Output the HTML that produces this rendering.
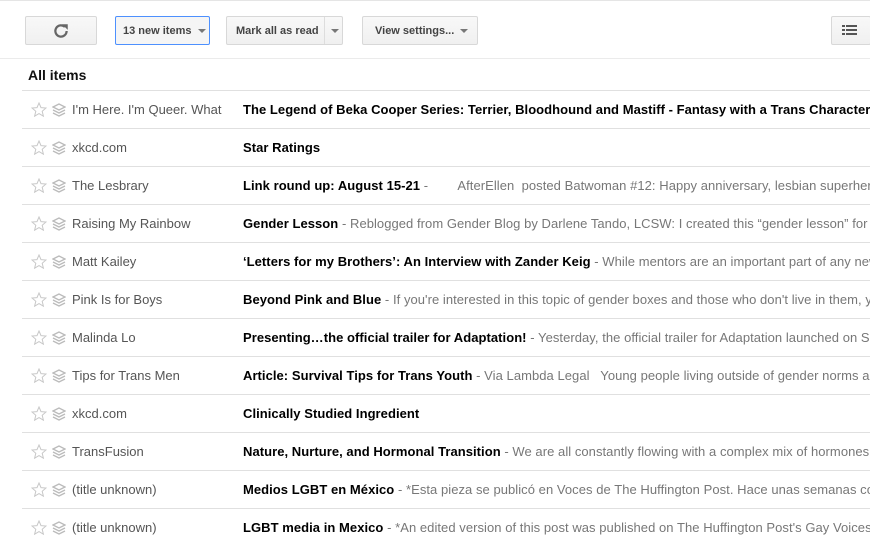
<!DOCTYPE html>
<html><head><style>
body{margin:0;width:870px;height:547px;overflow:hidden;background:#fff;font-family:"Liberation Sans",Arial,sans-serif;position:relative}
.top{position:absolute;left:0;top:0;width:870px;height:1px;background:#e5e5e5}
.btn{position:absolute;top:16px;height:29px;box-sizing:border-box;border:1px solid #d8d8d8;border-radius:2px;background:linear-gradient(#f8f8f8,#f0f0f0);font-size:11px;font-weight:bold;color:#444;line-height:28px}
.arr{display:inline-block;width:0;height:0;border-left:4px solid transparent;border-right:4px solid transparent;border-top:4px solid #777;vertical-align:middle}
.sep{position:absolute;left:0;top:58px;width:870px;height:1px;background:#ebebeb}
h1{position:absolute;left:28px;top:67px;margin:0;font-size:14px;font-weight:bold;color:#111}
.row{position:absolute;left:22px;width:848px;height:38px;border-top:1px solid #e0e0e0;font-size:13px;line-height:38px;white-space:nowrap;overflow:hidden}
.star{position:absolute;left:9px;top:11px}
.stk{position:absolute;left:30px;top:12px}
.src{position:absolute;left:50px;color:#555;width:160px;overflow:hidden}
.t{position:absolute;left:221px;color:#000;letter-spacing:0.05px}
.t span{color:#777}
</style></head><body>
<div class="top"></div>
<div class="btn" style="left:25px;width:72px;text-align:center">
<svg width="18" height="18" viewBox="0 0 16 16" style="margin-top:5px"><path d="M13 8a5 5 0 1 1-1.5-3.6" fill="none" stroke="#666" stroke-width="2"/><path d="M9 2h5v5z" fill="#666"/></svg></div>
<div class="btn" style="left:115px;width:95px;border-color:#4d90fe;background:#f5f5f5;padding-left:7px">13 new items &nbsp;<span class="arr"></span></div>
<div class="btn" style="left:226px;width:117px;padding-left:9px">Mark all as read<span style="position:absolute;left:97px;top:0;height:27px;border-left:1px solid #ddd;width:19px;text-align:center"><span class="arr"></span></span></div>
<div class="btn" style="left:362px;width:116px;padding-left:12px">View settings... &nbsp;<span class="arr"></span></div>
<div class="btn" style="left:831px;width:40px;padding-left:10px"><svg width="16" height="12" viewBox="0 0 16 12" style="margin-top:8px"><g fill="#555"><rect x="0" y="0" width="3" height="2"/><rect x="4" y="0" width="11" height="2"/><rect x="0" y="4" width="3" height="2"/><rect x="4" y="4" width="11" height="2"/><rect x="0" y="8" width="3" height="2"/><rect x="4" y="8" width="11" height="2"/></g></svg></div>
<div class="sep"></div>
<h1>All items</h1>
<div id="rows"></div>
<script>
var d=[["I'm Here. I'm Queer. What","The Legend of Beka Cooper Series: Terrier, Bloodhound and Mastiff - Fantasy with a Trans Character",""],
["xkcd.com","Star Ratings",""],
["The Lesbrary","Link round up: August 15-21"," - &nbsp;&nbsp;&nbsp;&nbsp;&nbsp;&nbsp;&nbsp;AfterEllen &nbsp;posted Batwoman #12: Happy anniversary, lesbian superheroes"],
["Raising My Rainbow","Gender Lesson"," - Reblogged from Gender Blog by Darlene Tando, LCSW: I created this “gender lesson” for the"],
["Matt Kailey","‘Letters for my Brothers’: An Interview with Zander Keig"," - While mentors are an important part of any new"],
["Pink Is for Boys","Beyond Pink and Blue"," - If you're interested in this topic of gender boxes and those who don't live in them, you"],
["Malinda Lo","Presenting…the official trailer for Adaptation!"," - Yesterday, the official trailer for Adaptation launched on Sh"],
["Tips for Trans Men","Article: Survival Tips for Trans Youth"," - Via Lambda Legal &nbsp; Young people living outside of gender norms are"],
["xkcd.com","Clinically Studied Ingredient",""],
["TransFusion","Nature, Nurture, and Hormonal Transition"," - We are all constantly flowing with a complex mix of hormones"],
["(title unknown)","Medios LGBT en México"," - *Esta pieza se publicó en Voces de The Huffington Post. Hace unas semanas co"],
["(title unknown)","LGBT media in Mexico"," - *An edited version of this post was published on The Huffington Post's Gay Voices"]];
var h="";
var star='<svg class="star" width="16" height="15" viewBox="0 0 16 15"><path d="M8 1l2 4.6 5 .4-3.8 3.3 1.2 4.9L8 11.6 3.6 14.2l1.2-4.9L1 6l5-.4z" fill="none" stroke="#c8c8c8" stroke-width="1"/></svg>';
var stk='<svg class="stk" width="14" height="14" viewBox="0 0 14 14"><g fill="none" stroke="#bbb" stroke-width="1.3"><path d="M1 4l6-3 6 3-6 3z"/><path d="M1 7l6 3 6-3"/><path d="M1 10l6 3 6-3"/></g></svg>';
d.forEach(function(r,i){h+='<div class="row" style="top:'+(90+i*38)+'px">'+star+stk+'<div class="src">'+r[0]+'</div><div class="t"><b>'+r[1]+'</b><span>'+r[2]+'</span></div></div>';});
document.getElementById("rows").innerHTML=h;
</script>
</body></html>
